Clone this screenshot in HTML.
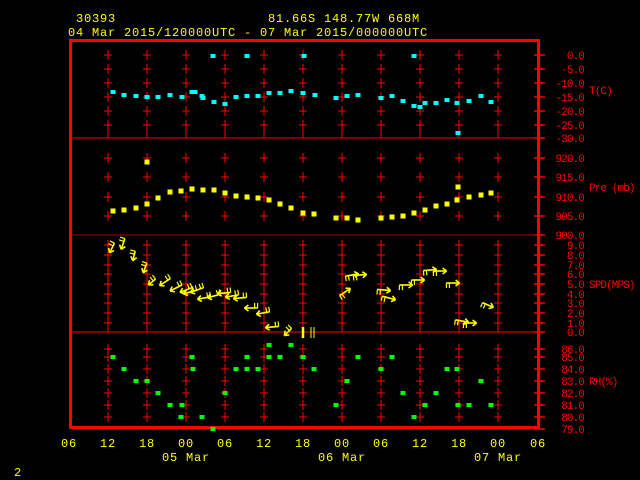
<!DOCTYPE html>
<html><head><meta charset="utf-8"><style>
html,body{margin:0;padding:0;background:#000;width:640px;height:480px;overflow:hidden}
svg{display:block}
text{font-family:"Liberation Mono",monospace;font-size:12px;letter-spacing:0.8px}
.sm text{font-size:11px;letter-spacing:-0.9px}
.y{fill:#ffff00}.r{fill:#ff0000}
</style></head><body>
<svg id="s" width="640" height="480" xmlns="http://www.w3.org/2000/svg">
<g id="g"></g>
<text class="y" x="76" y="22">30393</text>
<text class="y" x="268" y="22">81.66S  148.77W  668M</text>
<text class="y" x="68" y="36">04 Mar 2015/120000UTC - 07 Mar 2015/000000UTC</text>
<g class="r sm" text-anchor="end">
<text x="584" y="59">0.0</text><text x="584" y="73">-5.0</text><text x="584" y="87">-10.0</text><text x="584" y="101">-15.0</text><text x="584" y="115">-20.0</text><text x="584" y="129">-25.0</text><text x="584" y="142">-30.0</text>
<text x="584" y="162">920.0</text><text x="584" y="181">915.0</text><text x="584" y="201">910.0</text><text x="584" y="220">905.0</text><text x="584" y="239">900.0</text>
<text x="584" y="249">9.0</text><text x="584" y="259">8.0</text><text x="584" y="269">7.0</text><text x="584" y="278">6.0</text><text x="584" y="288">5.0</text><text x="584" y="298">4.0</text><text x="584" y="307">3.0</text><text x="584" y="317">2.0</text><text x="584" y="327">1.0</text><text x="584" y="336">0.0</text>
<text x="584" y="353">86.0</text><text x="584" y="361">85.0</text><text x="584" y="373">84.0</text><text x="584" y="385">83.0</text><text x="584" y="397">82.0</text><text x="584" y="409">81.0</text><text x="584" y="421">80.0</text><text x="584" y="433">79.0</text>
</g>
<g class="r sm">
<text x="589" y="94">T(C)</text><text x="589" y="191">Pre (mb)</text><text x="589" y="288">SPD(MPS)</text><text x="589" y="385">RH(%)</text>
</g>
<g class="y" text-anchor="middle">
<text x="69" y="447">06</text><text x="108" y="447">12</text><text x="147" y="447">18</text><text x="186" y="447">00</text><text x="225" y="447">06</text><text x="264" y="447">12</text><text x="303" y="447">18</text><text x="342" y="447">00</text><text x="381" y="447">06</text><text x="420" y="447">12</text><text x="459" y="447">18</text><text x="498" y="447">00</text><text x="538" y="447">06</text>
<text x="186" y="461">05 Mar</text><text x="342" y="461">06 Mar</text><text x="498" y="461">07 Mar</text>
</g>
<text class="y" x="14" y="476">2</text>
</svg>
<script>
var g=document.getElementById('g'),h='';
function L(a,b,c,d,col,w){h+='<line x1="'+a+'" y1="'+b+'" x2="'+c+'" y2="'+d+'" stroke="'+col+'" stroke-width="'+(w||1)+'"/>';}
function R(x,y,w,hh,col){h+='<rect x="'+(x-w/2)+'" y="'+(y-hh/2)+'" width="'+w+'" height="'+hh+'" fill="'+col+'"/>';}
var xs=[108,147,186,225,264,303,342,381,420,459,498];
var ty=[55,69,83,97,111,125],py=[158,177,197,216],sy=[245,255,265,274,284,294,303,313,323],ry=[349,357,369,381,393,405,417];
var all=ty.concat(py,sy,ry);
xs.forEach(function(x){all.forEach(function(y){L(x,y-5,x,y+5,'#f00');L(x-4,y,x+4,y,'#f00');});
 L(x,125,x,138,'#f00');L(x,323,x,332,'#f00');});
ty.concat([138],py,[235],sy,[332],ry,[429]).forEach(function(y){L(534,y,545,y,'#f00',1.5);});
L(71,138,539,138,'#f00');L(71,235,539,235,'#a00');L(71,332,539,332,'#f00');
h+='<rect x="70.5" y="40.5" width="468" height="387" fill="none" stroke="#f00" stroke-width="3"/>';
var T=[[113,92],[124,95],[136,96],[147,97],[158,97],[170,95],[182,97],[192,92],[195,92],[202,96],[203,98],[214,102],[225,104],[236,97],[247,96],[258,96],[269,93],[280,93],[291,91],[303,93],[315,95],[336,98],[347,96],[358,95],[381,98],[392,96],[403,101],[414,106],[420,107],[425,103],[436,103],[447,100],[457,103],[458,133],[469,101],[481,96],[491,102],[213,56],[247,56],[304,56],[414,56]];
T.forEach(function(p){R(p[0],p[1],5,4,'#00ffff');});
var P=[[113,211],[124,210],[136,208],[147,204],[147,162],[158,198],[170,192],[181,191],[192,189],[203,190],[214,190],[225,193],[236,196],[247,197],[258,198],[269,200],[280,204],[291,208],[303,213],[314,214],[336,218],[347,218],[358,220],[381,218],[392,217],[403,216],[414,213],[425,210],[436,206],[447,204],[457,200],[458,187],[469,197],[481,195],[491,193]];
P.forEach(function(p){R(p[0],p[1],5,5,'#ffff00');});
var H=[[113,357],[124,369],[136,381],[147,381],[158,393],[170,405],[181,417],[182,405],[192,357],[193,369],[202,417],[213,429],[225,393],[236,369],[247,357],[247,369],[258,369],[269,345],[269,357],[280,357],[291,345],[303,357],[314,369],[336,405],[347,381],[358,357],[381,369],[392,357],[403,393],[414,417],[425,405],[436,393],[447,369],[457,369],[458,405],[469,405],[481,381],[491,405]];
H.forEach(function(p){R(p[0],p[1],5,4,'#00ff00');});
var W=[[112,248,-4,8],[123,244,-3,9],[134,256,-2,8],[145,268,-3,8],[152,282,-6,5],[165,282,-9,6],[176,288,-10,5],[186,290,-10,4],[190,292,-11,3],[197,290,-11,4],[204,298,-11,2],[214,296,-11,3],[224,293,-11,1],[232,296,-11,2],[240,298,-11,1],[251,308,-11,0],[263,313,-11,2],[272,327,-11,1],[288,332,-6,6],[345,292,9,-6],[352,275,11,-2],[360,275,11,-1],[384,290,11,1],[389,298,11,3],[406,285,11,0],[418,280,11,0],[430,270,11,-1],[440,271,11,0],[453,283,11,0],[462,321,11,2],[470,323,11,0],[488,305,9,4]];
W.forEach(function(a){var x=a[0],y=a[1],dx=a[2],dy=a[3];var x0=x-dx*0.6,y0=y-dy*0.6,x1=x+dx*0.6,y1=y+dy*0.6;
 L(x0,y0,x1,y1,'#ff0',1.6);var len=Math.hypot(dx,dy)||1,ux=dx/len,uy=dy/len;
 L(x1,y1,x1-ux*4-uy*3,y1-uy*4+ux*3,'#ff0',1.6);L(x1,y1,x1-ux*4+uy*3,y1-uy*4-ux*3,'#ff0',1.6);
 L(x0,y0,x0-uy*5,y0+ux*5,'#ff0',1.2);L(x0+ux*3,y0+uy*3,x0+ux*3-uy*5,y0+uy*3+ux*5,'#ff0',1.2);});
L(303,327,303,338,'#ff0',2.5);L(311,327,311,338,'#ff0',1);L(314,327,314,338,'#ff0',1);
g.innerHTML=h;
</script>
</body></html>
